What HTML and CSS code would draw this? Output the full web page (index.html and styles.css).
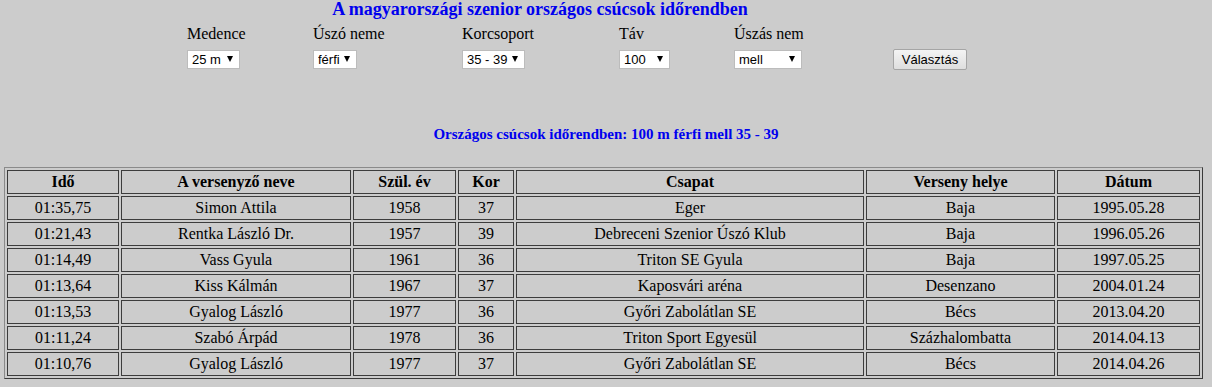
FILE: index.html
```html
<!DOCTYPE html>
<html lang="hu">
<head>
<meta charset="utf-8">
<title>Szenior országos csúcsok</title>
<link rel="stylesheet" href="styles.css">
</head>
<body>
<form class="filters">
  <h1 class="title">A magyarországi szenior országos csúcsok időrendben</h1>
  <label class="lbl">Medence</label>
  <label class="lbl">Úszó neme</label>
  <label class="lbl">Korcsoport</label>
  <label class="lbl">Táv</label>
  <label class="lbl">Úszás nem</label>
  <span class="sel w-medence"><select><option>25 m</option><option>50 m</option></select></span>
  <span class="sel w-nem"><select><option>férfi</option><option>női</option></select></span>
  <span class="sel w-kor"><select><option>35 - 39</option><option>40 - 44</option></select></span>
  <span class="sel w-tav"><select><option>100</option><option>200</option></select></span>
  <span class="sel w-usz"><select><option>mell</option><option>gyors</option></select></span>
  <button type="button" class="btn">Választás</button>
</form>

<h2 class="subtitle">Országos csúcsok időrendben: 100 m férfi mell 35 - 39</h2>

<table class="records">
  <thead>
    <tr>
      <th class="c-ido">Idő</th>
      <th class="c-nev">A versenyző neve</th>
      <th class="c-ev">Szül. év</th>
      <th class="c-kor">Kor</th>
      <th class="c-csapat">Csapat</th>
      <th class="c-hely">Verseny helye</th>
      <th class="c-datum">Dátum</th>
    </tr>
  </thead>
  <tbody>
    <tr><td>01:35,75</td><td>Simon Attila</td><td>1958</td><td>37</td><td>Eger</td><td>Baja</td><td>1995.05.28</td></tr>
    <tr><td>01:21,43</td><td>Rentka László Dr.</td><td>1957</td><td>39</td><td>Debreceni Szenior Úszó Klub</td><td>Baja</td><td>1996.05.26</td></tr>
    <tr><td>01:14,49</td><td>Vass Gyula</td><td>1961</td><td>36</td><td>Triton SE Gyula</td><td>Baja</td><td>1997.05.25</td></tr>
    <tr><td>01:13,64</td><td>Kiss Kálmán</td><td>1967</td><td>37</td><td>Kaposvári aréna</td><td>Desenzano</td><td>2004.01.24</td></tr>
    <tr><td>01:13,53</td><td>Gyalog László</td><td>1977</td><td>36</td><td>Győri Zabolátlan SE</td><td>Bécs</td><td>2013.04.20</td></tr>
    <tr><td>01:11,24</td><td>Szabó Árpád</td><td>1978</td><td>36</td><td>Triton Sport Egyesül</td><td>Százhalombatta</td><td>2014.04.13</td></tr>
    <tr><td>01:10,76</td><td>Gyalog László</td><td>1977</td><td>37</td><td>Győri Zabolátlan SE</td><td>Bécs</td><td>2014.04.26</td></tr>
  </tbody>
</table>
</body>
</html>
```
FILE: styles.css
```css
html, body {
  margin: 0;
  padding: 0;
}
body {
  background: #cccccc;
  color: #000;
  font-family: "Liberation Serif", "Times New Roman", serif;
  font-size: 16px;
}

.filters {
  display: grid;
  grid-template-columns: 126px 149px 157px 115px 159px 80px;
  margin: 0 0 0 187px;
  padding: 0;
}
.title {
  grid-column: 1 / span 5;
  grid-row: 1;
  margin: 0;
  text-align: center;
  font-size: 18px;
  line-height: 19px;
  font-weight: bold;
  color: #0000ee;
}
.lbl {
  grid-row: 2;
  margin-top: 6px;
  font-size: 16px;
  line-height: 18px;
}
.sel {
  grid-row: 3;
  position: relative;
  display: block;
  margin-top: 7px;
  height: 19px;
}
.sel select {
  appearance: none;
  -webkit-appearance: none;
  display: block;
  box-sizing: border-box;
  width: 100%;
  height: 19px;
  margin: 0;
  padding: 0 0 0 4px;
  border: 1px solid #bcbcbc;
  border-radius: 0;
  background: #fff;
  color: #000;
  font-family: "Liberation Sans", Arial, sans-serif;
  font-size: 13px;
  line-height: 17px;
}
.sel::after {
  content: "";
  position: absolute;
  right: 7px;
  top: 6px;
  width: 0;
  height: 0;
  border-left: 3px solid transparent;
  border-right: 3px solid transparent;
  border-top: 6px solid #000;
  pointer-events: none;
}
.w-medence { width: 53px; }
.w-nem { width: 44px; }
.w-kor { width: 63px; }
.w-tav { width: 51px; }
.w-usz { width: 68px; }

.btn {
  grid-row: 3;
  grid-column: 6;
  justify-self: start;
  box-sizing: border-box;
  width: 74px;
  height: 21px;
  margin: 6px 0 0 0;
  padding: 0;
  border: 1px solid #a5a5a5;
  border-radius: 2px;
  background: linear-gradient(#f4f4f4, #dedede);
  color: #000;
  font-family: "Liberation Sans", Arial, sans-serif;
  font-size: 13px;
  line-height: 19px;
}

.subtitle {
  margin: 56px 0 0 0;
  text-align: center;
  font-size: 15px;
  line-height: 17px;
  font-weight: bold;
  color: #0000ee;
}

.records {
  box-sizing: border-box;
  margin: 24px 0 0 4px;
  border-collapse: separate;
  border-spacing: 2px;
  border: 1px solid;
  border-color: #8a8a8a #3a3a3a #3a3a3a #8a8a8a;
  table-layout: fixed;
  font-size: 16px;
}
.records th,
.records td {
  box-sizing: border-box;
  height: 24px;
  padding: 2px 2px;
  border: 1px solid #3c3c3c;
  text-align: center;
  vertical-align: middle;
  line-height: 18px;
  white-space: nowrap;
}
.records th { font-weight: bold; }
.c-ido { width: 112px; }
.c-nev { width: 230px; }
.c-ev { width: 103px; }
.c-kor { width: 56px; }
.c-csapat { width: 348px; }
.c-hely { width: 189px; }
.c-datum { width: 143px; }
```
